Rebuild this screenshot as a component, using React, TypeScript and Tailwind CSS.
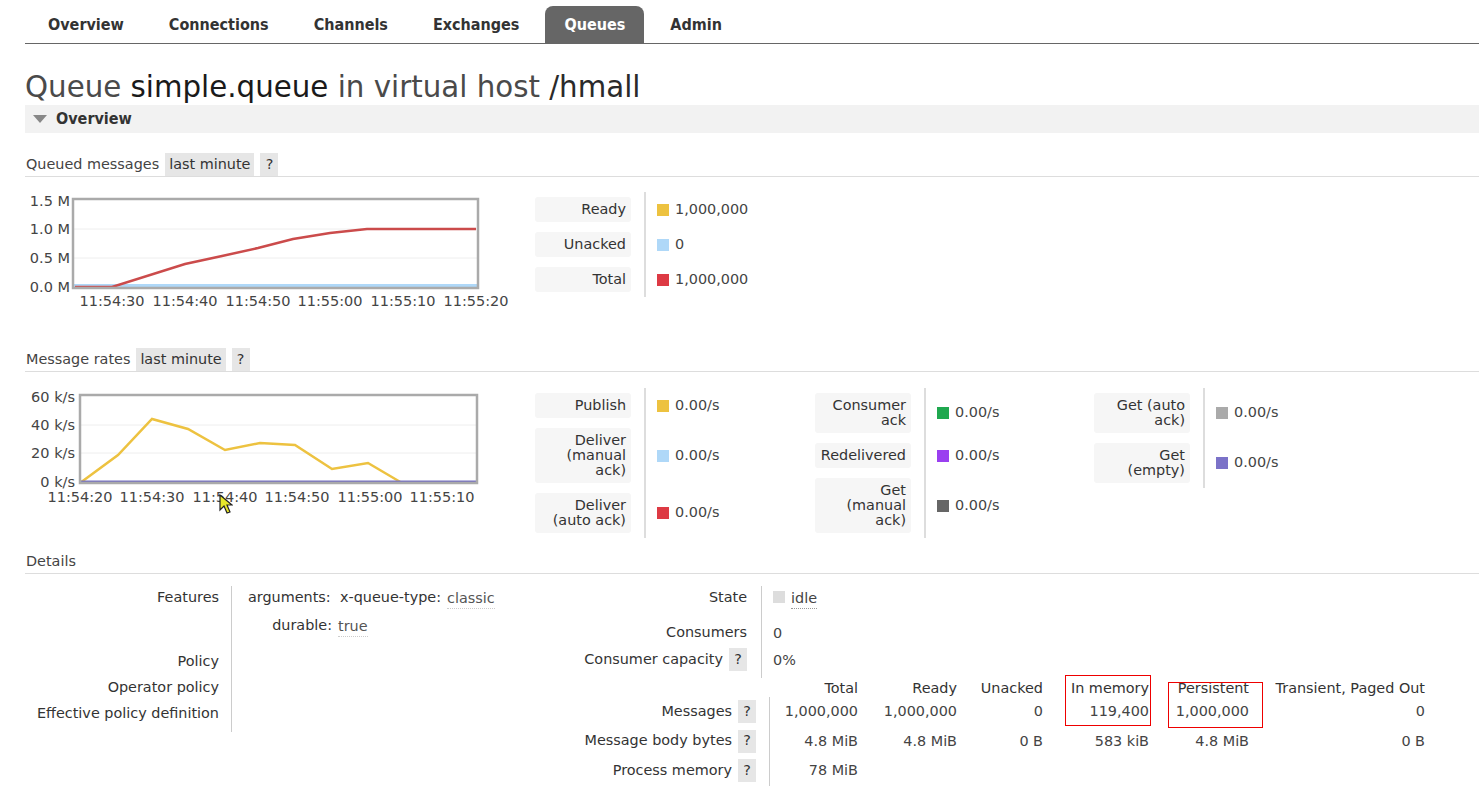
import React from 'react'

const cond = "font-['DejaVu_Sans_Condensed','DejaVu_Sans',sans-serif] font-bold"

function Tab({ label, active }: { label: string; active?: boolean }) {
  return (
    <div
      className={`h-[37px] px-[19px] flex items-center text-[16px] ${cond} ${
        active ? 'bg-[#666] text-white rounded-t-[8px]' : 'text-[#333]'
      }`}
    >
      {label}
    </div>
  )
}

function Help() {
  return <span className="inline-flex items-center justify-center h-[23px] w-[18px] bg-[#e6e6e6] text-[#333]">?</span>
}

function SectionHeader({ title, range }: { title: string; range?: boolean }) {
  return (
    <div className="flex items-end h-[24px] border-b border-[#ddd] pl-[1px]">
      <span className="leading-[23px] pr-[6px]">{title}</span>
      {range && (
        <>
          <span className="h-[23px] leading-[23px] px-[4px] bg-[#e6e6e6] text-[#333]">last minute</span>
          <span className="ml-[6px]">
            <Help />
          </span>
        </>
      )}
    </div>
  )
}

type Item = { label: string[]; color: string; value: string }

function Legend({ items, width }: { items: Item[]; width: string }) {
  return (
    <div className={`grid grid-cols-[109px_1fr] ${width}`}>
      {items.map((it, i) => (
        <React.Fragment key={i}>
          <div className="pr-[13px] py-[5px]">
            <div className="bg-[#f6f6f6] rounded-[3px] py-[5px] pr-[5px] text-right leading-[15px] text-[#333]">
              {it.label.map((l, j) => (
                <div key={j}>{l}</div>
              ))}
            </div>
          </div>
          <div className="border-l-2 border-[#ddd] pl-[11px] flex items-center">
            <span className="w-[12px] h-[12px] mr-[6px]" style={{ backgroundColor: it.color }} />
            <span>{it.value}</span>
          </div>
        </React.Fragment>
      ))}
    </div>
  )
}

function QueuedChart() {
  const times = ['11:54:30', '11:54:40', '11:54:50', '11:55:00', '11:55:10', '11:55:20']
  const xs = [87, 160, 233, 305, 378, 451]
  return (
    <svg width="495" height="120" className="shrink-0" fontFamily="DejaVu Sans, sans-serif" fontSize="14.5" fill="#444">
      <line x1="49" y1="39" x2="452" y2="39" stroke="#eee" />
      <line x1="49" y1="68" x2="452" y2="68" stroke="#eee" />
      <line x1="49" y1="96" x2="452" y2="96" stroke="#afd8f8" strokeWidth="4" />
      <polyline
        points="50,97 87,97 160,74 197,66 233,58 268,49 305,43 342,39 451,39"
        fill="none"
        stroke="#cb4b4b"
        strokeWidth="2.5"
      />
      <rect x="48" y="9" width="405" height="89" fill="none" stroke="#aaa" strokeWidth="2.5" />
      {['1.5 M', '1.0 M', '0.5 M', '0.0 M'].map((t, i) => (
        <text key={t} x="45" y={[16, 44, 73, 102][i]} textAnchor="end">
          {t}
        </text>
      ))}
      {times.map((t, i) => (
        <text key={t} x={xs[i]} y="116" textAnchor="middle">
          {t}
        </text>
      ))}
    </svg>
  )
}

function RatesChart() {
  const times = ['11:54:20', '11:54:30', '11:54:40', '11:54:50', '11:55:00', '11:55:10']
  const xs = [55, 127, 200, 272, 345, 417]
  return (
    <svg width="495" height="120" className="shrink-0" fontFamily="DejaVu Sans, sans-serif" fontSize="14.5" fill="#444">
      <line x1="56" y1="40" x2="451" y2="40" stroke="#eee" />
      <line x1="56" y1="68" x2="451" y2="68" stroke="#eee" />
      <polyline
        points="55,98 93,70 127,34 163,44 200,65 235,58 270,60 307,84 343,78 377,98"
        fill="none"
        stroke="#edc240"
        strokeWidth="2.5"
      />
      <line x1="56" y1="97" x2="451" y2="97" stroke="#7570c0" strokeWidth="3" />
      <rect x="55" y="10" width="397" height="88" fill="none" stroke="#aaa" strokeWidth="2.5" />
      {['60 k/s', '40 k/s', '20 k/s', '0 k/s'].map((t, i) => (
        <text key={t} x="50" y={[17, 45, 73, 102][i]} textAnchor="end">
          {t}
        </text>
      ))}
      {times.map((t, i) => (
        <text key={t} x={xs[i]} y="117" textAnchor="middle">
          {t}
        </text>
      ))}
    </svg>
  )
}

const msgCols = ['Total', 'Ready', 'Unacked', 'In memory', 'Persistent', 'Transient, Paged Out']
const msgRows = [
  { label: 'Messages', values: ['1,000,000', '1,000,000', '0', '119,400', '1,000,000', '0'] },
  { label: 'Message body bytes', values: ['4.8 MiB', '4.8 MiB', '0 B', '583 kiB', '4.8 MiB', '0 B'] },
  { label: 'Process memory', values: ['78 MiB', '', '', '', '', ''] },
]

export default function App() {
  return (
    <div className="relative w-[1479px] h-[786px] overflow-hidden bg-white text-[#444] text-[14.4px] font-['DejaVu_Sans',sans-serif]">
      {/* nav */}
      <div className="ml-[25px] pt-[6px] pl-[4px] flex gap-[7px] border-b border-[#666]">
        {['Overview', 'Connections', 'Channels', 'Exchanges', 'Queues', 'Admin'].map((t) => (
          <Tab key={t} label={t} active={t === 'Queues'} />
        ))}
      </div>

      <div className="pl-[25px]">
        <h1 className="mt-[26px] text-[29.3px] leading-[34px] text-[#4a4a4a]">
          Queue <span className="text-[#1a1a1a]">simple.queue</span> in virtual host <span className="text-[#2a2a2a]">/hmall</span>
        </h1>

        <div className="mt-[1px] h-[28px] bg-[#f2f2f2] flex items-center">
          <svg width="14" height="9" className="ml-[8px]" viewBox="0 0 14 9">
            <polygon points="0,0 14,0 7,8" fill="#888" />
          </svg>
          <span className={`ml-[9px] text-[16px] text-[#333] ${cond}`}>Overview</span>
        </div>

        <div className="mt-[20px]">
          <SectionHeader title="Queued messages" range />
        </div>
        <div className="mt-[13px] h-[120px] flex">
          <QueuedChart />
          <div className="ml-[15px] pt-[2px]">
            <Legend
              width="w-[280px]"
              items={[
                { label: ['Ready'], color: '#edc240', value: '1,000,000' },
                { label: ['Unacked'], color: '#afd8f8', value: '0' },
                { label: ['Total'], color: '#dd3a44', value: '1,000,000' },
              ]}
            />
          </div>
        </div>

        <div className="mt-[38px]">
          <SectionHeader title="Message rates" range />
        </div>
        <div className="mt-[13px] h-[155px] flex">
          <RatesChart />
          <div className="ml-[15px] pt-[3px] flex items-start">
            <Legend
              width="w-[280px]"
              items={[
                { label: ['Publish'], color: '#edc240', value: '0.00/s' },
                { label: ['Deliver', '(manual', 'ack)'], color: '#afd8f8', value: '0.00/s' },
                { label: ['Deliver', '(auto ack)'], color: '#dd3a44', value: '0.00/s' },
              ]}
            />
            <Legend
              width="w-[279px]"
              items={[
                { label: ['Consumer', 'ack'], color: '#1fa84f', value: '0.00/s' },
                { label: ['Redelivered'], color: '#9a3ff0', value: '0.00/s' },
                { label: ['Get', '(manual', 'ack)'], color: '#666666', value: '0.00/s' },
              ]}
            />
            <Legend
              width="w-[280px]"
              items={[
                { label: ['Get (auto', 'ack)'], color: '#aaaaaa', value: '0.00/s' },
                { label: ['Get', '(empty)'], color: '#7b72c8', value: '0.00/s' },
              ]}
            />
          </div>
        </div>

        <div className="mt-[10px]">
          <SectionHeader title="Details" />
        </div>

        <div className="mt-[12px] flex">
          {/* left table */}
          <div className="w-[495px] shrink-0 flex items-start">
            <div className="w-[207px] pr-[12px] border-r border-[#ccc] text-right text-[#333] pb-[6px]">
              <div className="h-[62px] leading-[22px]">Features</div>
              <div className="leading-[26px]">Policy</div>
              <div className="leading-[26px]">Operator policy</div>
              <div className="leading-[26px]">Effective policy definition</div>
            </div>
            <div className="pl-[16px] text-[#333]">
              <div className="leading-[22px] flex">
                <span className="w-[92px]">arguments:</span>
                <span>x-queue-type:</span>
                <span className="ml-[6px] text-[#555] border-b border-dotted border-[#ccc] leading-[20px] mt-[2px]">classic</span>
              </div>
              <div className="mt-[5px] leading-[22px] flex">
                <span className="w-[84px] text-right">durable:</span>
                <span className="ml-[6px] text-[#555] border-b border-dotted border-[#ccc] leading-[20px] mt-[2px]">true</span>
              </div>
            </div>
          </div>

          {/* right tables */}
          <div>
            <div className="flex items-start">
              <div className="w-[242px] pr-[14px] border-r border-[#ccc] text-right text-[#333]">
                <div className="h-[33px] leading-[22px]">State</div>
                <div className="h-[26px] leading-[26px]">Consumers</div>
                <div className="h-[33px] flex items-start justify-end pt-[3px] gap-[6px]">
                  <span className="leading-[23px]">Consumer capacity</span>
                  <Help />
                </div>
              </div>
              <div className="pl-[11px]">
                <div className="h-[33px] flex items-start gap-[6px]">
                  <span className="w-[12px] h-[12px] bg-[#ddd] mt-[5px]" />
                  <span className="leading-[20px] mt-[2px] border-b border-dotted border-[#999]">idle</span>
                </div>
                <div className="h-[26px] leading-[26px] pt-[1px]">0</div>
                <div className="h-[33px] leading-[23px] pt-[4px]">0%</div>
              </div>
            </div>

            <div className="grid grid-cols-[250px_88px_99px_86px_106px_100px_176px] text-right">
              <div />
              {msgCols.map((c) => (
                <div key={c} className="leading-[18px] pt-[1px] text-[#333]">
                  {c}
                </div>
              ))}
              {msgRows.map((r) => (
                <React.Fragment key={r.label}>
                  <div className="h-[29.5px] border-r border-[#ccc] pr-[13px] flex items-center justify-end gap-[6px] text-[#333]">
                    <span>{r.label}</span>
                    <Help />
                  </div>
                  {r.values.map((v, i) => (
                    <div key={i} className="h-[29.5px] leading-[29.5px]">
                      {v}
                    </div>
                  ))}
                </React.Fragment>
              ))}
            </div>
          </div>
        </div>
      </div>

      {/* annotation boxes */}
      <div className="absolute left-[1065px] top-[675px] w-[86px] h-[51px] border border-[#e00]" />
      <div className="absolute left-[1168px] top-[682px] w-[95px] h-[46px] border border-[#e00]" />

      {/* mouse cursor */}
      <svg className="absolute left-[219px] top-[494px]" width="14" height="20" viewBox="0 0 14 20">
        <polygon points="1,1 1,16 5,12 8,19 11,18 8,11 13,11" fill="#e8e82a" stroke="#222" strokeWidth="1.2" />
      </svg>
    </div>
  )
}
